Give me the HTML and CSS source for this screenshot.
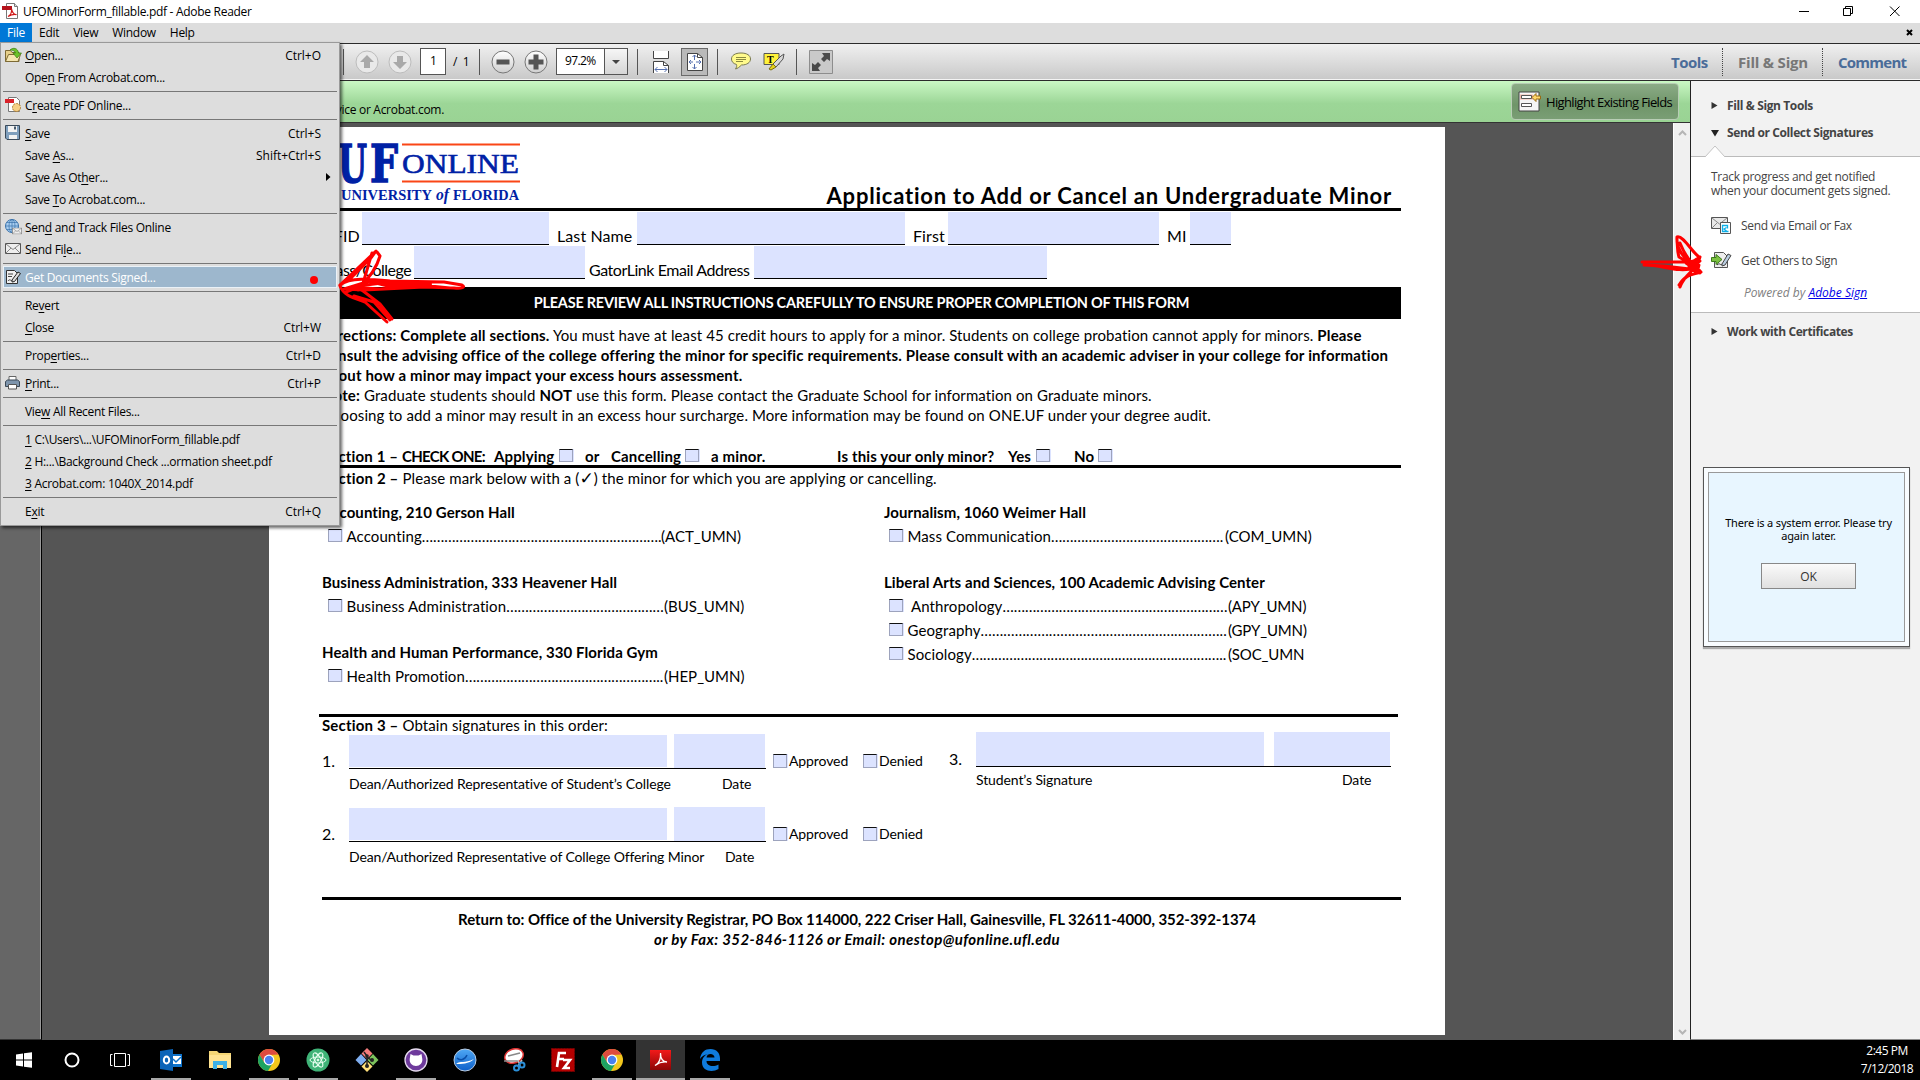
FILE: index.html
```html
<!DOCTYPE html>
<html lang="en">
<head>
<meta charset="utf-8">
<title>UFOMinorForm_fillable.pdf - Adobe Reader</title>
<link rel="stylesheet" href="styles.css">
</head>
<body>
<svg width="0" height="0" class="defs">
  <defs>
    <linearGradient id="gBtn" x1="0" y1="0" x2="0" y2="1"><stop offset="0" stop-color="#fff"/><stop offset="1" stop-color="#cfcfcf"/></linearGradient>
    <linearGradient id="gRed" x1="0" y1="0" x2="0" y2="1"><stop offset="0" stop-color="#f21a1a"/><stop offset="1" stop-color="#8d0606"/></linearGradient>
    <linearGradient id="gBlue" x1="0" y1="0" x2="0" y2="1"><stop offset="0" stop-color="#4fa8f5"/><stop offset="1" stop-color="#0d5fc9"/></linearGradient>
    <symbol id="chrome" viewBox="0 0 24 24">
      <circle cx="12" cy="12" r="11" fill="#f2c71d"/>
      <path d="M2.5 6.5A11 11 0 0 1 21.5 6.5L12 7 7.2 14.5Z" fill="#dd4b3e"/>
      <path d="M2.5 6.5A11 11 0 0 0 11 23l5-8.5-4 2.5-4.8-2.5Z" fill="#1da362"/>
      <circle cx="12" cy="12" r="5.4" fill="#fff"/><circle cx="12" cy="12" r="4.2" fill="#4a80ee"/>
    </symbol>
    <symbol id="pdf" viewBox="0 0 16 16">
      <path d="M4.500.5h8l3 3v12h-11z" fill="#fff" stroke="#777"/>
      <path d="M12.500.5v3h3" fill="#ddd" stroke="#777"/>
      <path d="M0 3h10v4H0z" fill="#b5121b"/>
      <path d="M6 13.500c2-1 4-4 3.500-7.500 1 4 3 6 5 5.500-3-.5-6 .5-8.500 2z" fill="none" stroke="#d01818" stroke-width="1.200"/>
    </symbol>
    <symbol id="mail" viewBox="0 0 16 11">
      <path d="M.5.500h15v10H.5z" fill="#eee" stroke="#555"/>
      <path d="M1 1l7 5.500L15 1M1 10l5-5M15 10l-5-5" fill="none" stroke="#888"/>
    </symbol>
  </defs>
</svg>

<div class="app">
  <header class="titlebar">
    <svg class="title-icon" width="16" height="16"><use href="#pdf"/></svg>
    <span class="title-text">UFOMinorForm_fillable.pdf - Adobe Reader</span>
    <svg class="win-buttons" width="110" height="22" fill="none" stroke="#000">
      <path d="M5 10.500h10M49.500 7.500h7v7h-7zM51.500 7.500v-2h7v7h-2M96 5.500l9.500 9.500M105.500 5.500L96 15"/>
    </svg>
  </header>

  <nav class="menubar">
    <span class="active">File</span><span>Edit</span><span>View</span><span>Window</span><span>Help</span>
    <svg width="7" height="7" class="doc-close"><path d="M1 1l5 5M6 1L1 6" stroke="#000" stroke-width="2"/></svg>
  </nav>

  <div class="toolbar">
    <div class="tools">
      <i class="sep"></i>
      <svg class="round-a" width="24" height="24"><circle cx="12" cy="12" r="11" fill="#e9e9e9" stroke="#bcbcbc"/><path d="M12 5l7 7h-4v6H9v-6H5z" fill="#a9a9a9"/></svg>
      <svg class="round-b" width="24" height="24"><circle cx="12" cy="12" r="11" fill="#e9e9e9" stroke="#bcbcbc"/><path d="M12 19l7-7h-4V6H9v6H5z" fill="#a9a9a9"/></svg>
      <span class="page-box">1</span><span class="page-total">/&nbsp;&nbsp;1</span>
      <i class="sep"></i>
      <svg class="round-a" width="24" height="24"><circle cx="12" cy="12" r="11" fill="url(#gBtn)" stroke="#777"/><path d="M5.500 9.500h13v5h-13z" fill="#555"/></svg>
      <svg class="round-b" width="24" height="24"><circle cx="12" cy="12" r="11" fill="url(#gBtn)" stroke="#777"/><path d="M4.500 9.500h5v-5h5v5h5v5h-5v5h-5v-5h-5z" fill="#555"/></svg>
      <span class="zoom-box">97.2%</span><span class="zoom-drop"></span>
      <i class="sep sep-zoom"></i>
      <svg class="fit-width" width="18" height="22" fill="none" stroke="#444">
        <path d="M1.500 0v7.500h15V0" fill="#fff"/><path d="M1.500 22V10.500h10l5 4V22" fill="#fff"/><path d="M11.500 10.500v4h5"/>
        <path d="M3 18.500h12M5.500 16L3 18.500 5.500 21M12.500 16l2.500 2.500-2.500 2.500" stroke="#5670b0"/>
      </svg>
      <span class="fit-page">
        <svg width="18" height="20" fill="none" stroke="#444"><path d="M1.500 1.500h10l5 4v13h-15z" fill="#fff"/><path d="M11.500 1.500v4h5"/>
        <path d="M8.500 3v5M8.500 12v5M3 10h4M10 10h5M6.500 5l2-2 2 2M6.500 15l2 2 2-2M5 8l-2 2 2 2M13 8l2 2-2 2" stroke="#5670b0"/></svg>
      </span>
      <i class="sep"></i>
      <svg class="bubble" width="22" height="19"><path d="M11 1c6 0 9.500 2.500 9.500 6s-3.500 6-9 6c-2 2-4 3.500-6 4 1-1.500 1.500-3 1-4.500C3 11.500 1.500 9.500 1.500 7 1.500 3.500 5 1 11 1z" fill="#fffa8c" stroke="#7a7a50"/><path d="M6 5.500h10M6 7.500h10M6 9.500h7" stroke="#8a8a40"/></svg>
      <svg class="highlighter" width="22" height="19"><path d="M1 1.500h15v11H1z" fill="#fff23a" stroke="#555"/><text x="4" y="10.500" class="tmark">T</text><path d="M10 12l8-8 3-2-1 5-7 8z" fill="#d8d8d8" stroke="#555"/><path d="M10 12l3 3-5 3-2-1z" fill="#e6d21a" stroke="#776b10"/></svg>
      <i class="sep"></i>
      <svg class="fullscreen" width="24" height="24"><path d="M.5.500h23v23H.5z" fill="#c9c9c9" stroke="#8d8d8d"/><path d="M3 21v-8l3 2 3-3 3 3-3 3 2 3zM21 3v8l-3-2-3 3-3-3 3-3-2-3z" fill="#4a4a4a"/></svg>
    </div>
    <div class="task-tabs"><span class="t1">Tools</span><span class="t2">Fill &amp; Sign</span><span class="t3">Comment</span></div>
  </div>

  <main class="main">
    <section class="viewer">
      <div class="message-bar">
        <span class="message">your computer. Please fill out the form using a device or Acrobat.com.</span>
        <span class="hl-button">
          <svg width="23" height="21"><path d="M1 1h20v19H1z" fill="#f5f5f5" stroke="#444"/><path d="M2 3.500h13v5H2z" fill="#f3b5a8"/><path d="M3.500 4.500h10v3h-10zM3.500 12.500h10v3h-10z" fill="#fff" stroke="#555"/><path d="M14 6.500l4-4v2.500h4.500v3H18v2.500z" fill="#ffd76a" stroke="#9a6a10"/></svg>
          Highlight Existing Fields
        </span>
      </div>
      <div class="canvas">
        <aside class="nav-rail"></aside>
        <article class="page">
          <div class="form-head">
            <svg class="logo" width="200" height="70">
              <g fill="#0021a5" class="logo-uf"><text x="16" y="55" textLength="29" lengthAdjust="spacingAndGlyphs">U</text><text x="48" y="55" textLength="28" lengthAdjust="spacingAndGlyphs">F</text></g>
              <path d="M80 17.500h118M80 54.500h118" stroke="#fa4616" stroke-width="2"/>
              <text x="80" y="45.500" class="logo-online" textLength="117" lengthAdjust="spacingAndGlyphs">ONLINE</text>
              <text x="19" y="73" class="logo-univ" textLength="91" lengthAdjust="spacingAndGlyphs">UNIVERSITY</text>
              <text x="114" y="73" class="logo-of" textLength="13" lengthAdjust="spacingAndGlyphs">of</text>
              <text x="131" y="73" class="logo-univ" textLength="66" lengthAdjust="spacingAndGlyphs">FLORIDA</text>
            </svg>
            <h1>Application to Add or Cancel an Undergraduate Minor</h1>
          </div>
          <div class="fields fields-1">
            <label>UFID</label><b></b><label>Last Name</label><b></b><label>First</label><b></b><label>MI</label><b></b>
          </div>
          <div class="fields fields-2">
            <label class="college">Class/College</label><b></b><label class="gator">GatorLink Email Address</label><b></b>
          </div>
          <div class="banner">PLEASE REVIEW ALL INSTRUCTIONS CAREFULLY TO ENSURE PROPER COMPLETION OF THIS FORM</div>
          <div class="directions">
            <p><strong>Directions: Complete all sections.</strong> You must have at least 45 credit hours to apply for a minor. Students on college probation cannot apply for minors. <strong>Please</strong></p>
            <p><strong>consult the advising office of the college offering the minor for specific requirements. Please consult with an academic adviser in your college for information</strong></p>
            <p><strong>about how a minor may impact your excess hours assessment.</strong></p>
            <p><strong>Note:</strong> Graduate students should <strong>NOT</strong> use this form. Please contact the Graduate School for information on Graduate minors.</p>
            <p>Choosing to add a minor may result in an excess hour surcharge. More information may be found on ONE.UF under your degree audit.</p>
          </div>
          <div class="section-1">
            <span>Section 1 – <em>CHECK ONE:</em></span><span>Applying</span><i class="cb"></i><span>or</span><span>Cancelling</span><i class="cb"></i><span>a minor.</span><span>Is this your only minor?</span><span>Yes</span><i class="cb"></i><span>No</span><i class="cb"></i>
          </div>
          <div class="section-2"><strong>Section 2 –</strong> Please mark below with a (<span class="check">✓</span>) the minor for which you are applying or cancelling.</div>
          <div class="minors">
            <div class="col">
              <h2>Accounting, 210 Gerson Hall</h2>
              <div class="minor"><i class="cb"></i><span>Accounting</span><span class="dots">&hellip;&hellip;&hellip;&hellip;&hellip;&hellip;&hellip;&hellip;&hellip;&hellip;&hellip;&hellip;&hellip;&hellip;&hellip;&hellip;&hellip;&hellip;&hellip;&hellip;&hellip;.</span><span class="code c83">(ACT_UMN)</span></div>
              <h2>Business Administration, 333 Heavener Hall</h2>
              <div class="minor"><i class="cb"></i><span>Business Administration</span><span class="dots">&hellip;&hellip;&hellip;&hellip;&hellip;&hellip;&hellip;&hellip;&hellip;&hellip;&hellip;&hellip;&hellip;&hellip;</span><span class="code c80">(BUS_UMN)</span></div>
              <h2>Health and Human Performance, 330 Florida Gym</h2>
              <div class="minor"><i class="cb"></i><span>Health Promotion</span><span class="dots">&hellip;&hellip;&hellip;&hellip;&hellip;&hellip;&hellip;&hellip;&hellip;&hellip;&hellip;&hellip;&hellip;&hellip;&hellip;&hellip;&hellip;..</span><span class="code c80">(HEP_UMN)</span></div>
            </div>
            <div class="col col-right">
              <h2>Journalism, 1060 Weimer Hall</h2>
              <div class="minor com"><i class="cb"></i><span>Mass Communication</span><span class="dots">&hellip;&hellip;&hellip;&hellip;&hellip;&hellip;&hellip;&hellip;&hellip;&hellip;&hellip;&hellip;&hellip;&hellip;&hellip;.</span><span class="code c87">(COM_UMN)</span></div>
              <h2>Liberal Arts and Sciences, 100 Academic Advising Center</h2>
              <div class="minor apy"><i class="cb"></i><span>Anthropology</span><span class="dots">&hellip;&hellip;&hellip;&hellip;&hellip;&hellip;&hellip;&hellip;&hellip;&hellip;&hellip;&hellip;&hellip;&hellip;&hellip;&hellip;&hellip;&hellip;&hellip;&hellip;</span><span class="code c80">(APY_UMN)</span></div>
              <div class="minor"><i class="cb"></i><span>Geography</span><span class="dots wide">&hellip;&hellip;&hellip;&hellip;&hellip;&hellip;&hellip;&hellip;&hellip;&hellip;&hellip;&hellip;&hellip;&hellip;&hellip;&hellip;&hellip;&hellip;&hellip;&hellip;&hellip;..</span><span class="code c80">(GPY_UMN)</span></div>
              <div class="minor"><i class="cb"></i><span>Sociology</span><span class="dots">&hellip;&hellip;&hellip;&hellip;&hellip;&hellip;&hellip;&hellip;&hellip;&hellip;&hellip;&hellip;&hellip;&hellip;&hellip;&hellip;&hellip;&hellip;&hellip;&hellip;&hellip;&hellip;..</span><span class="code c80">(SOC_UMN</span></div>
            </div>
          </div>
          <div class="section-3"><strong>Section 3 –</strong> Obtain signatures in this order:</div>
          <div class="signatures">
            <div class="sig-left">
              <div class="sig"><span class="num">1.</span><div class="sig-fields"><b></b><b></b></div><i class="cb"></i><span class="appr">Approved</span><i class="cb"></i><span>Denied</span></div>
              <div class="caption"><span class="cap-1">Dean/Authorized Representative of Student’s College</span><span>Date</span></div>
              <div class="sig sig-second"><span class="num">2.</span><div class="sig-fields"><b></b><b></b></div><i class="cb"></i><span class="appr">Approved</span><i class="cb"></i><span>Denied</span></div>
              <div class="caption"><span class="cap-2">Dean/Authorized Representative of College Offering Minor</span><span>Date</span></div>
            </div>
            <div class="sig-right">
              <div class="sig"><span class="num">3.</span><div class="sig-fields"><b></b><b></b></div></div>
              <div class="caption"><span class="cap-3">Student’s Signature</span><span>Date</span></div>
            </div>
          </div>
          <footer class="return">
            <p>Return to: Office of the University Registrar, PO Box 114000, 222 Criser Hall, Gainesville, FL 32611-4000, 352-392-1374</p>
            <p class="fax">or by Fax: 352-846-1126 or Email: onestop@ufonline.ufl.edu</p>
          </footer>
        </article>
        <div class="scrollbar">
          <svg width="9" height="6"><path d="M1 5l3.500-3.500L8 5" fill="none" stroke="#b5b5b5" stroke-width="2"/></svg>
          <svg width="9" height="6"><path d="M1 1l3.500 3.500L8 1" fill="none" stroke="#b5b5b5" stroke-width="2"/></svg>
        </div>
      </div>
    </section>

    <aside class="panel">
      <h3 class="p-first"><svg width="7" height="9"><path d="M.5 1l6 3.500-6 3.500z" fill="#333"/></svg>Fill &amp; Sign Tools</h3>
      <h3 class="p-open"><svg width="8" height="8"><path d="M0 1h8L4 7.500z" fill="#222"/></svg>Send or Collect Signatures</h3>
      <svg class="notch" width="22" height="12"><path d="M1 12L11 1l10 11" fill="#fff" stroke="#c4c4c4"/></svg>
      <div class="panel-body">
        <p class="track">Track progress and get notified<br>when your document gets signed.</p>
        <div class="action a-email"><svg width="21" height="18"><path d="M.5 1.500h16v11H.5z" fill="#e8e8e8" stroke="#555"/><path d="M1 2l7.500 6L16 2M1 12l5-5" fill="none" stroke="#888"/><path d="M9.500 6.500h10v11h-10z" fill="#fff" stroke="#555"/><path d="M14.500 15.500h-3v-6h5v3M17.500 15.500h-4M15.500 11.500l-2.500 1.500 2.500 2" fill="none" stroke="#0fb0e8" stroke-width="1.300"/></svg>Send via Email or Fax</div>
        <div class="action a-sign"><svg width="21" height="18"><path d="M3.500 1.500h9l4 4v11h-13z" fill="#eee" stroke="#555"/><path d="M6 14c3-3 3 1 5-1" fill="none" stroke="#333"/><path d="M.5 6.500H5v-3l6 5-6 5v-3H.5z" fill="#7cc142" stroke="#3c7a1a"/><path d="M11 13l6-10 3 1.500-6 9.500-3 1z" fill="#b9cde0" stroke="#444"/></svg>Get Others to Sign</div>
        <p class="powered">Powered by <a>Adobe Sign</a></p>
      </div>
      <h3 class="p-last"><svg width="7" height="9"><path d="M.5 1l6 3.500-6 3.500z" fill="#333"/></svg>Work with Certificates</h3>
      <div class="dialog"><div class="dialog-in"><p>There is a system error. Please try<br>again later.</p><button>OK</button></div></div>
    </aside>
  </main>

  <footer class="taskbar">
    <span class="s"><svg width="16" height="16" fill="#fff"><path d="M0 2.500l7-1v6H0zM8 1.300L16 .2v7.300H8zM0 8.500h7v6l-7-1zM8 8.500h8v7.300l-8-1.100z"/></svg></span>
    <span class="s"><svg width="16" height="16"><circle cx="8" cy="8" r="6.500" fill="none" stroke="#fff" stroke-width="2"/></svg></span>
    <span class="s s-view"><svg width="20" height="16" fill="none" stroke="#fff"><path d="M4.500 1.500h11v13h-11zM2.500 2.500h-2v11h2M17.500 2.500h2v11h-2"/></svg></span>
    <span class="t run"><svg width="22" height="22"><path d="M11 5h11v13H11z" fill="#0f74cc"/><path d="M12 7h9v8h-9z" fill="#fff"/><path d="M13 10l3 3 5-5" stroke="#0f74cc" stroke-width="1.500" fill="none"/><path d="M0 2L13 0v22L0 20z" fill="#0a64b8"/><ellipse cx="6.500" cy="11" rx="2.700" ry="3.500" fill="none" stroke="#fff" stroke-width="2"/></svg></span>
    <span class="t"><svg width="22" height="20"><path d="M0 1h8l2 2h12v15H0z" fill="#f5d675"/><path d="M0 5h22v13H0z" fill="#ffe391"/><path d="M4 19v-8h14v8h-4v-4H8v4z" fill="#3bb0e5"/></svg></span>
    <span class="t run"><svg width="24" height="24"><use href="#chrome"/></svg></span>
    <span class="t run"><svg width="24" height="24" fill="none" stroke="#e8fff0"><circle cx="12" cy="12" r="11.500" fill="#3fb377" stroke="none"/><ellipse cx="12" cy="12" rx="8" ry="3"/><ellipse cx="12" cy="12" rx="8" ry="3" transform="rotate(60 12 12)"/><ellipse cx="12" cy="12" rx="8" ry="3" transform="rotate(120 12 12)"/><circle cx="12" cy="12" r="1" fill="#fff"/></svg></span>
    <span class="t"><svg width="24" height="24"><path d="M12 0l5.500 5.500-5.500 5.500-5.500-5.500z" fill="#f37c7c"/><path d="M6 6l5.500 6L6 17.500.5 12z" fill="#7faef0"/><path d="M18 6l5.500 6-5.500 5.500-5.500-5.500z" fill="#7cc25c"/><path d="M12 13l5.500 5.500L12 24l-5.500-5.500z" fill="#ffe07a"/><path d="M9 4l3 4v10M12 9l4 3" stroke="#222" stroke-width="1.500" fill="none"/><circle cx="12" cy="18" r="2" fill="#222"/><circle cx="17" cy="12" r="2" fill="#222"/><circle cx="12" cy="8" r="1.800" fill="#222"/></svg></span>
    <span class="t run"><svg width="24" height="24"><circle cx="12" cy="12" r="11" fill="#6e3a9c" stroke="#e6dcef" stroke-width="1.300"/><path d="M6.500 6l3 1.500h5l3-1.500.8 5c.5 4-2.500 7-6.300 7s-6.800-3-6.300-7z" fill="#fff"/></svg></span>
    <span class="t"><svg width="24" height="24"><circle cx="12" cy="12" r="11" fill="url(#gBlue)" stroke="#b9cbe0"/><path d="M3 16c5-4 8 0 18-5-5 5-13 5-18 5z" fill="#fff"/><path d="M4 10c3 3 8 2 10-3" stroke="#0b4fa8" stroke-width="1.500" fill="none"/></svg></span>
    <span class="t"><svg width="24" height="24"><ellipse cx="12" cy="8" rx="9.500" ry="7" fill="#fff" stroke="#d33" stroke-width="1.500" transform="rotate(-20 12 8)"/><path d="M6 8l12-3M2 13h14" stroke="#888" stroke-width="1.500"/><path d="M16 12l2 6M20 12l-4 6" stroke="#bbb" stroke-width="1.500"/><circle cx="14.500" cy="20" r="2.500" fill="none" stroke="#2b8fd8" stroke-width="2"/><circle cx="20" cy="17" r="2.500" fill="none" stroke="#2b8fd8" stroke-width="2"/></svg></span>
    <span class="t"><svg width="24" height="24"><path d="M.5.500h23v23H.5z" fill="#b30000" stroke="#7a0000" stroke-dasharray="2 1"/><path d="M6 19L8 5h7M7 11h6M12 12h7l-6 8h6" stroke="#fff" stroke-width="2.600" fill="none"/></svg></span>
    <span class="t run"><svg width="24" height="24"><use href="#chrome"/></svg></span>
    <span class="t run on"><svg width="22" height="22"><path d="M0 1h21v20H0z" fill="url(#gRed)"/><path d="M5 16.500c4-2 6-6.500 5.500-12.500 0 6 2.500 9 6.500 9-4-.5-8 .5-12 3.500z" fill="none" stroke="#fff" stroke-width="1.300"/></svg></span>
    <span class="t run"><svg width="22" height="24"><path d="M1 11C2 4 6 1 11.500 1 17.500 1 21 5 21 10.500V13H7.500c0 5 6.500 6.500 12 3.500V21C13 25 3 23 3 14.500 3 10 6 7 9 6 5.500 6.500 2.500 8.500 1 11zM7.500 9.500h8C15.500 5 8 4.500 7.500 9.500z" fill="#0f7bdc"/></svg></span>
    <div class="clock"><span>2:45 PM</span><span>7/12/2018</span></div>
  </footer>
</div>

<div class="menu">
  <div class="mi"><svg width="17" height="16"><path d="M.5 14.500v-11h5l1.500 2h7v9z" fill="#e6cf8a" stroke="#7d6a35"/><path d="M.5 14.500l3-7h12l-2.500 7z" fill="#f5e6b0" stroke="#7d6a35"/><path d="M5 3c3-3 8-2 8.500 3h3l-4.500 5L8 6h2.500C10 4 8 3 5 3z" fill="#6cc22a" stroke="#3b7d12" stroke-width=".7"/></svg><span><u>O</u>pen...</span><kbd>Ctrl+O</kbd></div>
  <div class="mi"><span>Ope<u>n</u> From Acrobat.com...</span></div>
  <hr>
  <div class="mi"><svg width="17" height="16"><path d="M3.500.500h8l3 3v11h-11z" fill="#fff" stroke="#777"/><path d="M0 2h9v4H0z" fill="#d9222a"/><circle cx="11.500" cy="10.500" r="4" fill="#f6cf85" stroke="#a9762a" stroke-dasharray="2 1"/></svg><span>C<u>r</u>eate PDF Online...</span></div>
  <hr>
  <div class="mi"><svg width="17" height="16"><path d="M.5.500h14v14H2l-1.500-1.500z" fill="#7f9fbd" stroke="#3a4a5a"/><path d="M3 1h9v6H3zM4 10h8v4H4z" fill="#f2f2f2"/><path d="M9 1.500h2v3H9z" fill="#45586b"/></svg><span><u>S</u>ave</span><kbd>Ctrl+S</kbd></div>
  <div class="mi"><span>Save <u>A</u>s...</span><kbd>Shift+Ctrl+S</kbd></div>
  <div class="mi"><span>Save As Ot<u>h</u>er...</span><svg class="sub" width="5" height="8"><path d="M0 0l4.500 4L0 8z"/></svg></div>
  <div class="mi"><span>Save <u>T</u>o Acrobat.com...</span></div>
  <hr>
  <div class="mi"><svg width="17" height="16"><circle cx="7" cy="7" r="6.500" fill="#a8cdf0" stroke="#3a72aa"/><path d="M7 .5v13M.5 7h13M2 3.500h10M2 10.500h10" stroke="#3a72aa" stroke-width=".7"/><ellipse cx="7" cy="7" rx="3" ry="6.500" fill="none" stroke="#3a72aa" stroke-width=".7"/><svg x="7" y="8.500" width="10" height="7"><use href="#mail"/></svg></svg><span>Sen<u>d</u> and Track Files Online</span></div>
  <div class="mi"><svg width="17" height="12"><use href="#mail" width="16" height="11"/></svg><span>Send Fi<u>l</u>e...</span></div>
  <hr>
  <div class="mi hot"><svg width="17" height="16"><path d="M1.500 1.500h8l3 3v10h-11z" fill="#f0f0f0" stroke="#333"/><path d="M3 5h5M3 7.500h4M3 12c2-3 3 1 5-1" stroke="#444" fill="none"/><path d="M7 11l6-8 2.500 1.500-6 8L7 13z" fill="#ddd" stroke="#222"/></svg><span>Get Documents Signed...</span></div>
  <hr>
  <div class="mi"><span>Re<u>v</u>ert</span></div>
  <div class="mi"><span><u>C</u>lose</span><kbd>Ctrl+W</kbd></div>
  <hr>
  <div class="mi"><span>Prop<u>e</u>rties...</span><kbd>Ctrl+D</kbd></div>
  <hr>
  <div class="mi"><svg width="17" height="16"><path d="M4 1.500h7v4H4z" fill="#fff" stroke="#666"/><path d="M.5 6.500l2-1.500h10l2 1.500v5H.5z" fill="#7e95ad" stroke="#3b4856"/><path d="M3.500 9.500h8v4.500h-8z" fill="#fff" stroke="#555"/></svg><span><u>P</u>rint...</span><kbd>Ctrl+P</kbd></div>
  <hr>
  <div class="mi"><span>Vie<u>w</u> All Recent Files...</span></div>
  <hr>
  <div class="mi"><span><u>1</u> C:\Users\...\UFOMinorForm_fillable.pdf</span></div>
  <div class="mi"><span><u>2</u> H:...\Background Check ...ormation sheet.pdf</span></div>
  <div class="mi"><span><u>3</u> Acrobat.com: 1040X_2014.pdf</span></div>
  <hr>
  <div class="mi"><span>E<u>x</u>it</span><kbd>Ctrl+Q</kbd></div>
</div>

<svg class="ink ink-left" width="160" height="90" fill="none" stroke="#f00" stroke-width="3" stroke-linecap="round" stroke-linejoin="round">
  <circle cx="4" cy="40" r="4" fill="#f00" stroke="none"/>
  <path d="M30 45L66 11 61 18 40 39 30 45M67 12l3 4M62 13L51 50M70 16c-4 14-12 22-22 34M30 45c10-8 30-6 50-4l54 1 18 3c4 2 0 4-8 3l-30-1-60 3-20-1 26-8 60 4-50 4-30-2 40-5 60 6"/>
  <path d="M60 41l60 3-40 2z" fill="#f00" stroke-width="4"/>
  <path d="M30 46c4 10 14 12 25 16l22 20M36 52l12-5 22 17 12 15M44 56l20 6 16 18"/>
</svg>
<svg class="ink ink-right" width="72" height="60" fill="none" stroke="#f00" stroke-width="3" stroke-linecap="round" stroke-linejoin="round">
  <path d="M6 29h56M8 32c20 0 32 8 52 3L64 24M8 32l20 1 34 4M62 34C48 28 40 15 41 4c6-2 14 14 22 20-8 8-14 4-20 0-2-6-1-8-2-16M44 10c4 10 10 20 20 28M44 54c2-6 10-16 19-22l-2 8-8-6M43 52c8-12 14-10 22-13M52 36l12-8M50 30l14 10"/>
</svg>
</body>
</html>
```
FILE: styles.css
```css
* { box-sizing: border-box; }
body { margin: 0; width: 1920px; height: 1080px; overflow: hidden; position: relative; font: 12px "Open Sans", "Noto Sans", sans-serif; letter-spacing: -0.29px; color: #000; }
p, h1, h2, h3, hr { margin: 0; }
svg { display: block; flex: none; }
.defs { position: absolute; }
.app { display: grid; grid-template-rows: 23px 20px 38px 959px 40px; height: 1080px; }

/* window chrome */
.titlebar { display: flex; align-items: center; background: #fff; }
.title-icon { margin: -1px 5px 0 2px; }
.title-text { line-height: 22px; }
.win-buttons { margin: 0 16px 0 auto; }
.menubar { display: flex; align-items: center; background: #ddd; line-height: 19px; }
.menubar span { padding: 0 7px; height: 20px; }
.menubar .active { background: #0078d7; color: #fff; width: 32px; }
.doc-close { margin: -2px 7px 0 auto; }
.toolbar { display: flex; justify-content: space-between; border-top: 1px solid #2b2b2b; border-bottom: 1px solid #2b2b2b; background: linear-gradient(#f0f0f0, #c8c8c8); padding-left: 343px; box-shadow: inset 0 -1px #f4f4f4; }
.tools { display: flex; align-items: center; height: 35px; }
.sep { width: 1px; height: 26px; background: #555; }
.round-a { margin-left: 11px; }
.round-b { margin-left: 9px; margin-right: 8px; }
.page-box { width: 26px; height: 27px; border: 1px solid #555; background: #fff; line-height: 24px; padding-left: 9px; }
.page-total { width: 33px; padding-left: 7px; }
.zoom-box { width: 49px; height: 27px; border: 1px solid #555; background: #fff; line-height: 24px; padding-left: 8px; letter-spacing: -0.6px; }
.zoom-drop { width: 23px; height: 27px; border: 1px solid #555; border-left: 0; background: linear-gradient(#f6f6f6, #d6d6d6); display: grid; place-items: center; }
.zoom-drop::after { content: ""; border: 4px solid transparent; border-top-color: #444; border-bottom: 0; }
.sep-zoom { margin-left: 9px; }
.fit-width { margin: 0 11px 0 14px; }
.fit-page { width: 27px; height: 28px; border: 1px solid #6a6a6a; background: #b9b9b9; display: grid; place-items: center; margin-right: 9px; }
.bubble { margin: 0 11px 0 12px; }
.highlighter { margin-right: 11px; }
.tmark { font: bold 10px "Liberation Serif", serif; }
.fullscreen { margin-left: 12px; }
.task-tabs { display: flex; align-items: center; height: 35px; font-size: 15px; font-weight: 700; color: #4a6c99; line-height: 28px; white-space: nowrap; }
.task-tabs span + span { border-left: 1px dotted #444; }
.t1 { width: 51px; letter-spacing: -0.5px; }
.t2 { width: 100px; padding-left: 15px; color: #777; letter-spacing: -0.2px; }
.t3 { width: 98px; padding-left: 15px; letter-spacing: -0.75px; }

/* document viewer */
.main { display: flex; }
.viewer { width: 1690px; display: flex; flex-direction: column; }
.message-bar { height: 42px; background: linear-gradient(#caf8c4, #9cd697 55%, #9ad394); border-bottom: 1px solid #333; display: flex; justify-content: space-between; padding-right: 10px; }
.message { width: 444px; text-align: right; line-height: 57px; height: 41px; white-space: nowrap; }
.hl-button { width: 168px; height: 37px; margin: 2px 1px 0 0; border: 1px solid #b8cdb5; border-radius: 4px; background: linear-gradient(#8bab86, #6f9569 60%, #7a9e75); display: flex; align-items: center; gap: 5px; padding-left: 6px; font-size: 13px; letter-spacing: -0.64px; white-space: nowrap; }
.canvas { flex: 1; background: #555; display: flex; }
.nav-rail { width: 42px; background: #666; border-right: 1px solid #000; border-bottom: 1px solid #333; margin-right: 227px; box-shadow: inset -1px 0 #999; }
.page { width: 1176px; height: 908px; margin-top: 4px; background: #fff; padding-left: 53px; font: 15px/20px Lato, "Open Sans", sans-serif; letter-spacing: 0.1px; white-space: nowrap; }
.page strong { font-weight: 700; letter-spacing: 0.17px; }
.scrollbar { width: 17px; margin-left: 228px; background: #f0f0f0; border-left: 1px solid #fff; display: flex; flex-direction: column; justify-content: space-between; align-items: center; padding: 7px 0 5px; }

/* form */
.form-head { height: 84px; width: 1079px; border-bottom: 3px solid #000; display: flex; justify-content: space-between; }
.logo { overflow: visible; }
.logo-uf { font: bold 52px "DejaVu Serif", serif; letter-spacing: 0; stroke: #0021a5; stroke-width: 1.500; }
.logo-online { font: 28px "Liberation Serif", serif; fill: #0021a5; stroke: #0021a5; stroke-width: .6; letter-spacing: 0; }
.logo-univ { font: bold 15px "Liberation Serif", serif; fill: #0021a5; letter-spacing: 0; }
.logo-of { font: italic bold 16px "Liberation Serif", serif; fill: #0021a5; letter-spacing: 0; }
.form-head h1 { font-size: 22px; line-height: 28px; font-weight: 700; letter-spacing: 0.78px; margin: 55px 9px 0 0; }
.fields { display: grid; height: 33px; align-items: end; font-size: 16px; line-height: 19px; }
.fields-1 { margin-top: 1px; grid-template-columns: 40px 187px 88px 268px 43px 211px 31px 41px; }
.fields-2 { margin-top: 1px; grid-template-columns: 92px 171px 169px 293px; }
.fields label { padding-left: 8px; }
.fields label:first-child { padding-left: 0; }
.fields .college { letter-spacing: -0.5px; }
.fields .gator { padding-left: 4px; letter-spacing: -0.45px; }
.fields b { height: 33px; background: #dce3ff; border-bottom: 1px solid #000; }
.banner { width: 1079px; height: 32px; margin-top: 8px; background: #000; color: #fff; text-align: center; font-size: 14.5px; font-weight: 700; line-height: 32px; letter-spacing: -0.25px; }
.directions { margin-top: 6px; }
.cb { width: 14px; height: 13px; background: #dce3ff; border: 1px solid #9da3bd; border-top-color: #111; flex: none; box-shadow: 1px 0 #dce3ff; }
.section-1 { width: 1079px; height: 22px; margin-top: 21px; border-bottom: 3px solid #000; display: grid; grid-template-columns: 172px 65px 14px 38px 74px 14px 138px 171px 28px 14px 48px 14px; font-weight: 700; line-height: 21px; letter-spacing: 0.14px; }
.section-1 em { font-style: normal; letter-spacing: -0.7px; }
.section-1 .cb { margin-top: 3px; }
.section-1 span:nth-child(4), .section-1 span:nth-child(7) { padding-left: 12px; }
.section-1 span:nth-child(11) { padding-left: 24px; }
.check { font-family: "DejaVu Sans", sans-serif; font-weight: bold; font-size: 17px; line-height: 16px; }
.minors { display: grid; grid-template-columns: 562px 430px; margin-top: 14px; height: 201px; }
.minors h2 { font-size: 15px; font-weight: 700; line-height: 20px; height: 24px; letter-spacing: 0.08px; }
.minor + h2 { margin-top: 22px; }
.minor { display: flex; height: 24px; margin-left: 6px; width: 416px; }
.minor .cb { margin: 3px 4.500px 0 0; }
.dots { flex: 1; min-width: 0; letter-spacing: 0; }
.wide { letter-spacing: 0.13px; }
.code { letter-spacing: 0; }
.c80 { width: 80px; }
.c83 { width: 83px; }
.c87 { width: 87px; }
.col-right .minor { margin-left: 5px; width: 419px; }
.col-right .c80 { letter-spacing: -0.15px; }
.col-right .com { width: 423px; }
.apy .cb { margin-right: 8px; }
.section-3 { width: 1079px; margin: 11px 0 0 -3px; padding-left: 3px; border-top: 3px solid #000; line-height: 16px; height: 19px; }
.signatures { display: flex; height: 164px; font-size: 14px; letter-spacing: -0.1px; }
.sig-left { width: 627px; padding-top: 1px; }
.sig { display: flex; height: 35px; align-items: flex-end; line-height: 16px; }
.num { width: 27px; font-size: 16px; letter-spacing: 0; line-height: 17px; }
.sig-fields { display: flex; gap: 7px; width: 417px; height: 35px; border-bottom: 1px solid #000; margin-right: 7px; }
.sig-fields b { width: 318px; background: #dce3ff; }
.sig-left .sig-fields b:first-child { margin: 1px 0; }
.sig-fields b + b { width: 91px; }
.sig .cb { margin: 0 2px 1px 0; height: 14px; }
.appr { width: 72px; }
.sig-left .appr + .cb { margin-left: 2px; }
.sig-second { margin-top: 13px; }
.sig-left .caption { margin-top: 5px; padding-left: 27px; display: flex; height: 20px; }
.cap-1 { width: 373px; }
.cap-2 { width: 376px; letter-spacing: -0.13px; }
.sig-right .sig { margin-top: -1px; }
.sig-right .sig-fields { width: 415px; gap: 10px; margin: 0; }
.sig-right .sig-fields b { width: 288px; }
.sig-right .sig-fields b + b { width: 116px; }
.sig-right .caption { margin-top: 3px; padding-left: 27px; display: flex; }
.cap-3 { width: 366px; }
.return { width: 1079px; border-top: 3px solid #000; padding: 9px 9px 0 0; text-align: center; font-weight: 700; letter-spacing: -0.06px; }
.fax { font-style: italic; letter-spacing: 0.41px; }

/* right panel */
.panel { flex: 1; border-left: 1px solid #222; background: #f2f2f2; border-bottom: 1px solid #888; color: #444; }
.panel h3 { font-size: 12px; font-weight: 700; line-height: 20px; letter-spacing: -0.38px; display: flex; align-items: center; padding-left: 20px; height: 27px; }
.panel h3 svg { margin-right: 9px; }
.panel .p-open svg { margin-right: 8px; }
.panel .p-first { margin-top: 11px; }
.notch { margin: -1px 0 -1px 13px; position: relative; }
.panel-body { height: 157px; background: #fff; border: solid #bbb; border-width: 1px 0; padding-left: 20px; }
.track { padding-top: 13px; line-height: 14px; letter-spacing: -0.31px; }
.action { display: flex; align-items: center; gap: 9px; letter-spacing: -0.34px; height: 20px; }
.a-email { margin-top: 17px; }
.a-sign { margin-top: 15px; }
.powered { font-style: italic; color: #808080; margin: 15px 0 0 33px; line-height: 16px; letter-spacing: 0; }
.powered a { color: #0000e8; text-decoration: underline; }
.panel .p-last { margin-top: 5px; }
.dialog { width: 207px; height: 180px; margin: 122px 0 0 12px; padding: 4px; border: 1px solid #555; background: #f8fcff; box-shadow: 0 2px 1px #aaa; }
.dialog-in { height: 170px; border: 1px solid #999; background: #e8f6ff; text-align: center; color: #000; font: 11px/13px "Noto Sans", sans-serif; letter-spacing: -0.17px; padding: 43px 0 0 4px; }
.dialog button { width: 95px; height: 26px; margin-top: 21px; border: 1px solid #888; background: linear-gradient(#fafafa, #e0e0e0); font: 12px "Open Sans", sans-serif; color: #333; padding: 0; }

/* taskbar */
.taskbar { background: #000; display: flex; color: #fff; }
.taskbar > span { display: grid; place-items: center; height: 40px; }
.s { width: 48px; }
.taskbar .s-view { width: 50px; padding-right: 2px; }
.t { width: 49px; position: relative; }
.run::after { content: ""; position: absolute; left: 5px; right: 4px; bottom: 0; height: 2px; background: #a8a8a8; }
.on { background: #333; }
.on::after { left: 0; right: 0; }
.clock { margin-left: auto; width: 66px; text-align: center; display: flex; flex-direction: column; line-height: 18px; padding-top: 2px; letter-spacing: -0.5px; }

/* file menu */
.menu { position: absolute; left: 0; top: 42px; width: 340px; height: 484px; background: #ddd; border: 1px solid #999; padding: 1px 2px 0; box-shadow: 2px 2px 3px rgba(0, 0, 0, .6); }
.mi { height: 22px; line-height: 21px; display: flex; align-items: center; padding-left: 22px; position: relative; white-space: nowrap; }
.mi > svg:first-child { margin: 0 3px 0 -20px; }
.mi kbd { margin-left: auto; margin-right: 16px; font: inherit; letter-spacing: -0.03px; }
.mi .sub { margin-left: auto; margin-right: 6px; }
.menu u { text-underline-offset: 2px; text-decoration-thickness: 1px; }
.menu hr { border: 0; height: 6px; background: linear-gradient(#777, #777) 0 3px / 100% 1px no-repeat; }
.hot { background: #9db7cd; color: #fff; outline: 1px solid #eaf1f7; outline-offset: -1px; }

/* freehand marks */
.ink { position: absolute; }
.ink-left { left: 310px; top: 240px; }
.ink-right { left: 1636px; top: 233px; }
```
